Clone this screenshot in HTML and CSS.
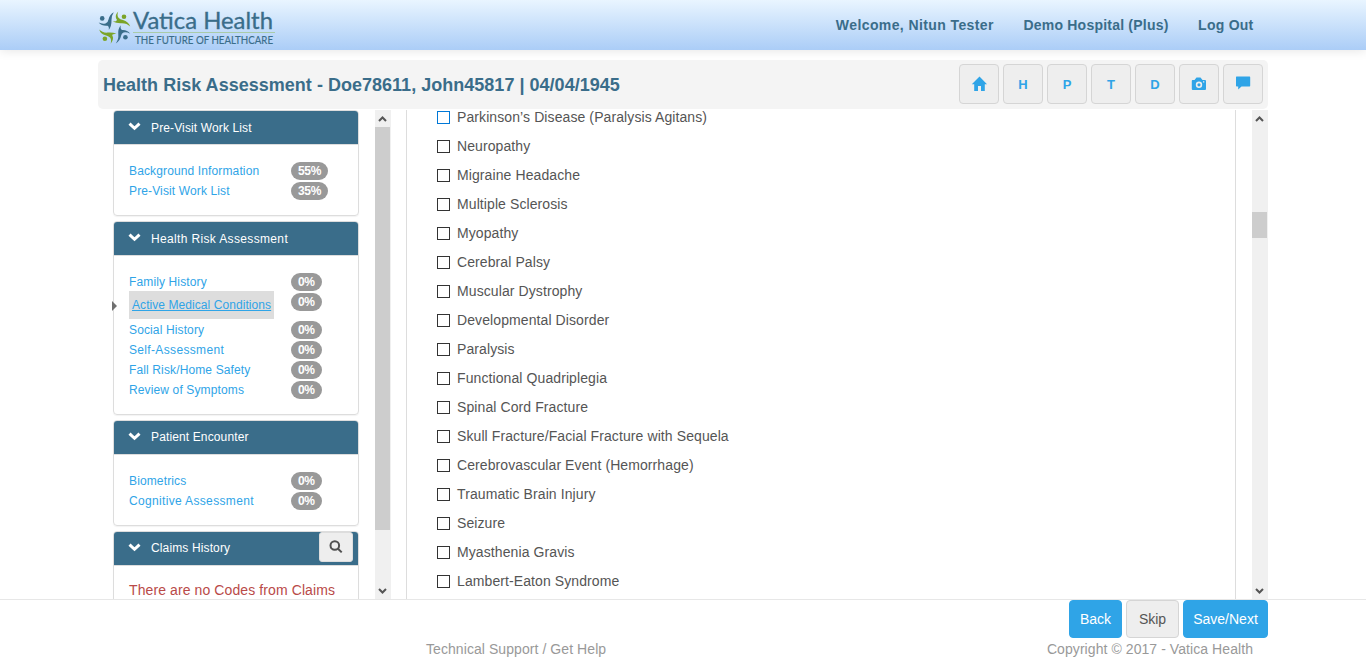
FILE: index.html
```html
<!DOCTYPE html>
<html lang="en">
<head>
<meta charset="utf-8">
<title>Health Risk Assessment</title>
<link rel="stylesheet" href="styles.css">
</head>
<body>
<header class="topbar">
  <svg class="logo" width="190" height="42" viewBox="0 0 190 42">
    <g fill="#3a6d8a">
      <circle cx="4.200" cy="10.400" r="2.300"/>
      <path d="M.6 14.600Q4 16.300 7.500 15.500Q10 14.800 10.500 11.500Q11.500 6.500 15.800 4.300Q13.300 8 13.500 12Q13.700 18 10.800 22Q11.300 18.500 9.500 17.700Q4 18.300 .6 14.600Z"/>
      <circle cx="27.400" cy="29.200" r="2.300"/>
      <path d="M22.800 17.300Q22 21 24 22Q29 21.500 32.200 25.700Q28.500 23.800 25.500 24.500Q23.500 25 23 28Q22 33 17.800 35.500Q20.800 31 20.300 27Q19.700 21 22.800 17.300Z"/>
    </g>
    <g fill="#7ba428">
      <circle cx="26" cy="8.700" r="2.300"/>
      <path d="M20.200 3.500Q18.700 7.500 20.500 9.800Q22 11.500 25 12Q30.500 13.500 32.200 18.600Q29 15.200 24 15.200Q18.500 15.500 14.600 13.500Q18.500 13.700 19 12Q16 8 20.200 3.500Z"/>
      <circle cx="6.900" cy="30.700" r="2.300"/>
      <path d="M1.200 21.500Q4.500 25 9.500 24.600Q14.500 24 18.500 25.800Q14.500 25.700 14.200 27.300Q16.500 31 12.700 35.700Q13.700 31.500 12 29.500Q10.500 28 7.500 27.300Q2.500 26 1.200 21.500Z"/>
    </g>
    <text class="logo-name" x="35" y="20.500" textLength="140" lengthAdjust="spacingAndGlyphs">Vatica Health</text>
    <path d="M35 24.500H177" stroke="#a9cba8"/>
    <text class="logo-tag" x="37" y="36" textLength="138" lengthAdjust="spacingAndGlyphs">THE FUTURE OF HEALTHCARE</text>
  </svg>
  <nav class="topnav"><a class="user">Welcome, Nitun Tester</a><a class="site">Demo Hospital (Plus)</a><a class="logout">Log Out</a></nav>
</header>

<section class="titlebar">
  <h1>Health Risk Assessment - Doe78611, John45817 | 04/04/1945</h1>
  <div class="tools">
    <a class="tool"><svg width="16" height="16" viewBox="0 0 16 16"><path d="M8.500 .5 16 8.300H13.800V15H10V10H7V15H3.200V8.300H.8Z"/></svg></a>
    <a class="tool">H</a><a class="tool">P</a><a class="tool">T</a><a class="tool">D</a>
    <a class="tool"><svg width="16" height="16" viewBox="0 0 16 16"><path fill-rule="evenodd" d="M1.500 4H3.500L5.500 1.500H9.500L11.500 4H14Q15 4 15 5V13Q15 14 14 14H1.800Q.8 14 .8 13V5Q.8 4 1.500 4ZM8 5.600A3.200 3.200 0 1 0 8 12A3.200 3.200 0 1 0 8 5.600ZM8 7.200A1.600 1.600 0 1 1 8 10.400A1.600 1.600 0 1 1 8 7.200ZM12 5.300V6.500H13.300V5.300Z"/></svg></a>
    <a class="tool"><svg width="16" height="16" viewBox="0 0 16 16"><path d="M1.500 .5H14.500Q15.200 .5 15.200 1.300V9.700Q15.200 10.500 14.500 10.500H6.500L3.200 13.500V10.500H1.700Q1 10.500 1 9.700V1.300Q1 .5 1.500 .5Z"/></svg></a>
  </div>
</section>

<main class="workspace">
  <aside class="sidebar">
    <section class="panel">
      <h2><svg class="chev" width="13" height="9" viewBox="0 0 13 9"><path d="M1.500 1.700 6.500 6.300 11.500 1.700"/></svg><span>Pre-Visit Work List</span></h2>
      <ul>
        <li><a>Background Information</a><b>55%</b></li>
        <li><a>Pre-Visit Work List</a><b>35%</b></li>
      </ul>
    </section>
    <section class="panel">
      <h2><svg class="chev" width="13" height="9" viewBox="0 0 13 9"><path d="M1.500 1.700 6.500 6.300 11.500 1.700"/></svg><span class="wide">Health Risk Assessment</span></h2>
      <ul>
        <li><a>Family History</a><b>0%</b></li>
        <li class="current"><a>Active Medical Conditions</a><b>0%</b></li>
        <li><a>Social History</a><b>0%</b></li>
        <li><a class="wide">Self-Assessment</a><b>0%</b></li>
        <li><a>Fall Risk/Home Safety</a><b>0%</b></li>
        <li><a>Review of Symptoms</a><b>0%</b></li>
      </ul>
    </section>
    <section class="panel raised">
      <h2><svg class="chev" width="13" height="9" viewBox="0 0 13 9"><path d="M1.500 1.700 6.500 6.300 11.500 1.700"/></svg><span>Patient Encounter</span></h2>
      <ul>
        <li><a>Biometrics</a><b>0%</b></li>
        <li><a class="wide">Cognitive Assessment</a><b>0%</b></li>
      </ul>
    </section>
    <section class="panel raised">
      <h2><svg class="chev" width="13" height="9" viewBox="0 0 13 9"><path d="M1.500 1.700 6.500 6.300 11.500 1.700"/></svg><span>Claims History</span>
        <a class="search"><svg width="14" height="14" viewBox="0 0 14 14"><circle cx="5.800" cy="5.500" r="4.300"/><path d="M9 8.700 12.700 12.400"/></svg></a></h2>
      <p class="warning">There are no Codes from Claims</p>
    </section>
  </aside>
  <div class="scroll scroll-left">
    <svg width="15" height="17" viewBox="0 0 15 17"><path d="M4 11 7.500 7.500 11 11"/></svg>
    <i class="thumb"></i>
    <svg class="down" width="15" height="17" viewBox="0 0 15 17"><path d="M4 7 7.500 10.500 11 7"/></svg>
  </div>
  <div class="conditions">
    <label class="hover"><i></i><span>Parkinson’s Disease (Paralysis Agitans)</span></label>
    <label><i></i><span>Neuropathy</span></label>
    <label><i></i><span>Migraine Headache</span></label>
    <label><i></i><span>Multiple Sclerosis</span></label>
    <label><i></i><span>Myopathy</span></label>
    <label><i></i><span>Cerebral Palsy</span></label>
    <label><i></i><span>Muscular Dystrophy</span></label>
    <label><i></i><span>Developmental Disorder</span></label>
    <label><i></i><span>Paralysis</span></label>
    <label><i></i><span>Functional Quadriplegia</span></label>
    <label><i></i><span>Spinal Cord Fracture</span></label>
    <label><i></i><span>Skull Fracture/Facial Fracture with Sequela</span></label>
    <label><i></i><span>Cerebrovascular Event (Hemorrhage)</span></label>
    <label><i></i><span>Traumatic Brain Injury</span></label>
    <label><i></i><span>Seizure</span></label>
    <label><i></i><span>Myasthenia Gravis</span></label>
    <label><i></i><span>Lambert-Eaton Syndrome</span></label>
  </div>
  <div class="scroll scroll-right">
    <svg width="15" height="17" viewBox="0 0 15 17"><path d="M4 11 7.500 7.500 11 11"/></svg>
    <i class="thumb"></i>
    <svg class="down" width="15" height="17" viewBox="0 0 15 17"><path d="M4 7 7.500 10.500 11 7"/></svg>
  </div>
</main>

<footer class="footer">
  <div class="actions"><a class="btn back">Back</a><a class="btn skip">Skip</a><a class="btn save">Save/Next</a></div>
  <div class="legal"><span>Technical Support / Get Help</span><span>Copyright © 2017 - Vatica Health</span></div>
</footer>
</body>
</html>
```
FILE: styles.css
```css
* { box-sizing: border-box; }
body {
  margin: 0;
  height: 669px;
  overflow: hidden;
  background: #fff;
  color: #555;
  font: 14px/20px "Liberation Sans", Arial, sans-serif;
}
h1, h2, ul, p { margin: 0; padding: 0; }
ul { list-style: none; }
svg { display: block; flex: none; }

.topbar {
  height: 50px;
  padding: 8px 113px 0 98px;
  display: flex;
  justify-content: space-between;
  background: linear-gradient(#e9f5ff, #abcdf7);
  box-shadow: 0 1px 10px rgba(0, 0, 0, .1);
}
.logo-name { font: 22.500px Lato, sans-serif; fill: #3a6d8a; stroke: #3a6d8a; stroke-width: .3px; }
.logo-tag { font: 10.500px Lato, sans-serif; fill: #3a6d8a; stroke: #3a6d8a; stroke-width: .15px; }
.topnav { display: flex; gap: 29.500px; padding-top: 7px; font-weight: bold; color: #3a6d8a; white-space: nowrap; }
.user { letter-spacing: .4px; }
.site { letter-spacing: .22px; }
.logout { letter-spacing: .25px; margin-right: -.5px; }

.titlebar {
  width: 1170px;
  height: 49px;
  margin: 10px 0 0 98px;
  padding: 4px 5px;
  display: flex;
  justify-content: space-between;
  background: #f4f4f4;
  border-radius: 5px;
  position: relative;
}
h1 { font-size: 18px; line-height: 42px; letter-spacing: .02px; color: #3a6d8a; white-space: nowrap; }
.tools { display: flex; gap: 4px; }
.tool {
  width: 40px;
  height: 40px;
  display: flex;
  align-items: center;
  justify-content: center;
  padding-top: 2px;
  border: 1px solid #d5d5d5;
  border-radius: 4px;
  background: #eee;
  color: #2fa4e7;
  font-size: 13px;
  font-weight: bold;
}
.tool svg { fill: #2fa4e7; margin-top: -2px; }

.workspace { height: 489px; margin: 1px 98px 0 111px; padding-left: 2px; display: flex; overflow: hidden; }
.sidebar { width: 246px; display: flex; flex-direction: column; gap: 5px; flex: none; }
.panel {
  flex: none;
  border: 1px solid #ddd;
  border-radius: 4px;
  box-shadow: 0 1px 1px rgba(0, 0, 0, .05);
  font-size: 12px;
}
.panel h2 {
  height: 34px;
  padding-left: 14px;
  display: flex;
  align-items: center;
  border-bottom: 1px solid #ddd;
  border-radius: 3px 3px 0 0;
  background: #3a6d8a;
  color: #fff;
  font-size: 12px;
  font-weight: normal;
}
.panel h2 span { margin-left: 10px; letter-spacing: .13px; }
.panel h2 .wide { letter-spacing: .35px; }
.raised h2 span { margin-top: -2px; }
.chev { margin-top: -3px; fill: none; stroke: #fff; stroke-width: 3px; }
.panel ul { padding: 15px; }
.panel li { height: 20px; display: grid; grid-template-columns: 162px auto; justify-content: start; color: #2fa4e7; letter-spacing: .13px; }
.panel li a { justify-self: start; padding-top: 1px; white-space: nowrap; }
.panel li .wide { letter-spacing: .34px; }
.panel li b {
  height: 18px;
  margin-top: 2px;
  padding: 0 7px;
  border-radius: 9px;
  background: #999;
  color: #fff;
  line-height: 18px;
  letter-spacing: -.35px;
}
.panel .current { height: 28px; position: relative; }
.panel .current a { width: 145px; height: 28px; padding: 4px 3px; background: #ddd; text-decoration: underline; letter-spacing: .07px; }
.current::before {
  content: "";
  position: absolute;
  left: -17px;
  top: 10px;
  border: 5px solid transparent;
  border-left-color: #707070;
  border-right: 0;
}
.search {
  width: 34px;
  height: 30px;
  margin: -3px 5px 0 auto;
  display: grid;
  place-items: center;
  border: 1px solid #ddd;
  border-radius: 3px;
  background: #eee;
}
.search svg { fill: none; stroke: #505050; stroke-width: 2px; }
.warning { padding: 14px 15px; color: #b94a48; font-size: 14px; letter-spacing: .1px; white-space: nowrap; }

.scroll { width: 16px; display: flex; flex-direction: column; background: #f0f0f0; flex: none; }
.scroll svg { fill: none; stroke: #555; stroke-width: 2px; }
.scroll .down { margin-top: auto; }
.thumb { width: 15px; background: #cdcdcd; }
.scroll-left { margin: 0 15px 0 16px; }
.scroll-left .thumb { height: 403px; }
.scroll-right { margin-left: 16px; }
.scroll-right .thumb { height: 26px; margin-top: 85px; }

.conditions { width: 830px; padding: 1px 30px 0; border: 1px solid #ddd; border-width: 0 1px; flex: none; }
.conditions label { height: 29px; display: flex; gap: 7px; line-height: 14px; }
.conditions i { width: 13px; height: 13px; border: 1px solid #333; }
.conditions .hover i { border-color: #0078d7; }
.conditions span { margin-top: -1px; letter-spacing: .095px; white-space: nowrap; }

.footer { height: 70px; border-top: 1px solid #e7e7e7; padding: 0 98px; }
.actions { display: flex; justify-content: flex-end; gap: 4px; }
.btn {
  height: 38px;
  line-height: 36px;
  border: 1px solid #2fa4e7;
  border-radius: 4px;
  background: #2fa4e7;
  color: #fff;
  text-align: center;
}
.back, .skip { width: 53px; }
.skip { background: #eee; border-color: #d5d5d5; color: #555; }
.save { width: 85px; }
.legal { display: flex; justify-content: space-between; padding: 1px 15px 0 328px; color: #999; letter-spacing: .07px; }
```
